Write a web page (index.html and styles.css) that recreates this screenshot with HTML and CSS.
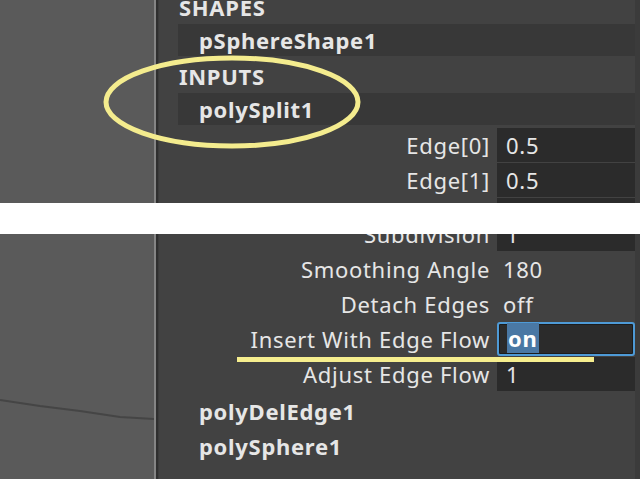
FILE: index.html
```html
<!DOCTYPE html>
<html lang="en">
<head>
    <meta charset="UTF-8">
    <meta name="viewport" content="width=device-width, initial-scale=1.0">
    <title>Attribute Editor - Insert With Edge Flow</title>
    <link rel="stylesheet" href="styles.css">
</head>
<body>
    <!-- first capture: the node list -->
    <div class="shot shot-top">
        <div class="viewport"></div>
        <div class="divider"></div>
        <div class="editor editor-top">
            <div class="heading">SHAPES</div>
            <div class="node">pSphereShape1</div>
            <div class="heading">INPUTS</div>
            <div class="node">polySplit1</div>
            <div class="attrs">
                <div class="attr"><span class="label">Edge[0]</span><span class="field">0.5</span></div>
                <div class="attr"><span class="label">Edge[1]</span><span class="field">0.5</span></div>
                <div class="attr"><span class="label"></span><span class="field"></span></div>
            </div>
        </div>
        <svg class="mark-ellipse" width="640" height="203" viewBox="0 0 640 203">
            <ellipse cx="232" cy="102" rx="126" ry="44" fill="none" stroke="#f4ec8e" stroke-width="5"/>
        </svg>
    </div>

    <div class="gap"></div>

    <!-- second capture: the polySplit1 attributes -->
    <div class="shot shot-bottom">
        <div class="viewport">
            <svg class="edge-line" width="154" height="245" viewBox="0 0 154 245">
                <polyline points="0,166 40,172 80,177 120,183 154,185" fill="none" stroke="#454545" stroke-width="2"/>
            </svg>
        </div>
        <div class="divider"></div>
        <div class="editor editor-bottom">
            <div class="attrs">
                <div class="attr"><span class="label">Subdivision</span><span class="field">1</span></div>
                <div class="attr"><span class="label">Smoothing Angle</span><span class="field plain">180</span></div>
                <div class="attr"><span class="label">Detach Edges</span><span class="field plain">off</span></div>
                <div class="attr"><span class="label">Insert With Edge Flow</span><span class="field active"><span class="sel">on</span></span></div>
                <div class="attr"><span class="label">Adjust Edge Flow</span><span class="field">1</span></div>
            </div>
            <div class="nodes">
                <div class="node plain">polyDelEdge1</div>
                <div class="node plain">polySphere1</div>
            </div>
        </div>
        <div class="mark-underline"></div>
    </div>
</body>
</html>
```

FILE: styles.css
```css
body {
    margin: 0;
    background-color: #fff;
    font-family: "Noto Sans", "Open Sans", sans-serif;
    font-size: 22px;
    letter-spacing: 0.7px;
    color: #e6e6e6;
}
.shot {
    position: relative;
    display: grid;
    grid-template-columns: 154px 5px 1fr;
    overflow: hidden;
}
.shot-top {
    height: 203px;
}
.shot-bottom {
    height: 245px;
}
.gap {
    height: 31px;
    background-color: #fff;
}
.viewport {
    background-color: #5a5a5a;
}
.divider {
    background: linear-gradient(to right, #858585 0 2px, #2f2f2f 2px 4px, #3b3b3b 4px);
}
.editor {
    background-color: #424242;
    padding: 0 5px 0 19px;
    display: flex;
    flex-direction: column;
    box-shadow: inset -5px 0 0 #3b3b3b;
}
.editor-top {
    margin-top: -13px;
}
.editor-bottom {
    margin-top: -17px;
}
.heading {
    height: 37px;
    line-height: 40px;
    padding-left: 1px;
    font-weight: bold;
}
.node {
    height: 32px;
    line-height: 33px;
    padding-left: 21px;
    font-weight: bold;
    background-color: #383838;
}
.nodes {
    display: flex;
    flex-direction: column;
    gap: 3px;
    margin-top: 6px;
}
.node.plain {
    background-color: transparent;
}
.attrs {
    display: flex;
    flex-direction: column;
    gap: 3px;
    margin-top: 3px;
}
.editor-bottom .attrs {
    margin-top: 0;
}
.attr {
    display: grid;
    grid-template-columns: 1fr 138px;
    column-gap: 7px;
    height: 32px;
}
.label {
    text-align: right;
    line-height: 34px;
    white-space: nowrap;
}
.field {
    background-color: #2b2b2b;
    line-height: 34px;
    padding-left: 9px;
    box-sizing: border-box;
}
.field.plain {
    background-color: transparent;
    padding-left: 6px;
}
.field.active {
    border: 2px solid #4e9ad6;
    border-radius: 3px;
    box-shadow: inset 0 0 0 1px #1c1c1c;
    line-height: 29px;
    padding-left: 8px;
}
.sel {
    background-color: #4a78a4;
    color: #fff;
    font-weight: bold;
    padding: 0 2px 0 1px;
}
.mark-ellipse {
    position: absolute;
    left: 0;
    top: 0;
}
.edge-line {
    display: block;
}
.mark-underline {
    position: absolute;
    left: 237px;
    top: 123px;
    width: 357px;
    height: 5px;
    background-color: #f6ee8e;
}
```
